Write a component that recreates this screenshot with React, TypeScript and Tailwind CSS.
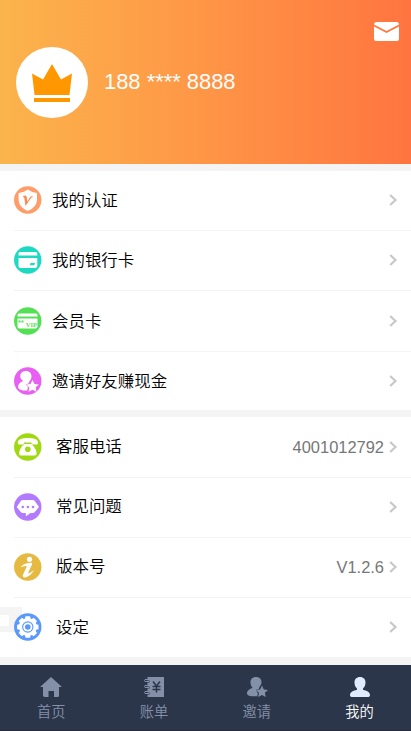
import type { ReactNode } from "react";

type RowProps = {
  label: string;
  icon: ReactNode;
  value?: string;
  height?: string;
  last?: boolean;
  wide?: boolean;
  shift?: string;
};

function Badge({ color, children }: { color: string; children: ReactNode }) {
  return (
    <svg width="28" height="28" viewBox="0 0 28 28" fill="#fff" className="shrink-0">
      <circle cx="13.75" cy="14" r="13.7" fill={color} />
      {children}
    </svg>
  );
}

function ShieldIcon() {
  return (
    <Badge color="#ff9c68">
      <path d="M13.800 3.500q4.500 3.300 9.200 3.500V14q0 7-9.200 11Q4.600 21 4.600 14V7Q9.500 6.800 13.800 3.500z" />
      <path d="M8.800 10.500q2-1.500 3.700-.5l.8 5.500 3-4.500q1-1.200 3-.7-2.200 1.200-3.400 3.200L11.500 20l-1.200-8q-.3-1-1.500-1.500z" fill="#ff8a50" />
    </Badge>
  );
}

function BankCardIcon() {
  return (
    <Badge color="#1dd9c1">
      <path d="M6 6h15.700q1.600 0 1.600 1.500v2H4.500v-2Q4.500 6 6 6zM4.500 12h18.800v8q0 2-2 2H6.500q-2 0-2-2z" />
      <path d="M16.500 17h4.500l-.7 2.200h-4.500z" fill="#1dd9c1" />
    </Badge>
  );
}

function VipCardIcon() {
  return (
    <Badge color="#55df55">
      <path d="M5 6.500h17q1.500 0 1.500 1.500v1.500h-20V8q0-1.500 1.500-1.500zM3.500 11.500h20v8q0 2-2 2h-16q-2 0-2-2z" />
      <path d="M4.500 13.500h2v2h-2zM7.500 13.500h2v2h-2z" fill="#55df55" />
      <text x="11.800" y="20" fontSize="6.500" fontWeight="700" fontFamily="Liberation Serif, serif" fill="#55df55">VIP</text>
    </Badge>
  );
}

function InviteBadgeIcon() {
  return (
    <Badge color="#e860f2">
      <path d="M12 4c3.500 0 5.500 2.300 5.500 5.300 0 2-.8 3.600-2 4.900l-1 2.300-2.500.8 2 3-.8 3.300c-5 .2-9.100-1-9.100-3.600 0-3 2.100-4.700 5.100-6-2-1.200-3-2.900-3-4.900C6.200 6.300 8.400 4 12 4z" />
      <path d="M18.500 13l2 3.900 4.300.6-3.100 3 .7 4.300-3.900-2-3.900 2 .7-4.300-3-3 4.200-.6z" />
    </Badge>
  );
}

function PhoneIcon() {
  return (
    <Badge color="#a0d911">
      <path d="M3.800 9.500C4 6 8.500 5 14 5s9.800 1 10 4.500c0 1.500-.5 2-2 2h-2.500c-1.500 0-2-.5-2-2H10c0 1.500-.5 2-2 2H5.500c-1.200 0-1.700-.5-1.700-2z" />
      <path d="M10.200 11h7.200c1.800 2 4.800 4.500 5.200 9 .1 1.700-.5 2.500-2 2.500H7.200c-1.500 0-2.200-.8-2-2.500.4-4.500 3.300-7 5-9z" />
      <circle cx="13.800" cy="16.200" r="2.800" fill="#a0d911" />
    </Badge>
  );
}

function ChatIcon() {
  return (
    <Badge color="#b27aff">
      <path d="M9 7h9.800q1 0 1.800.8l4.400 6.200-4.400 5.200q-.8.800-1.800.8h-2.300L12 23.200l-.3-3.200H8.800q-1 0-1.800-.8L2.700 14 7 7.800Q7.800 7 9 7z" />
      <g fill="#b27aff">
        <circle cx="8.800" cy="14" r="1.300" />
        <circle cx="13.900" cy="14" r="1.300" />
        <circle cx="19" cy="14" r="1.300" />
      </g>
    </Badge>
  );
}

function InfoIcon() {
  return (
    <Badge color="#e6b940">
      <circle cx="15.500" cy="6.300" r="2.600" />
      <path d="M6.500 14.200c1.800-2.500 6-4.200 10-4.400 1.500 0 1.900.5 1.500 1.600L14.500 19c-.4 1-.1 1.500.8 1.200 1.600-.6 3-2 4.700-3.200-2 4-5.900 7.300-9.200 7.500-1.800 0-2.400-1.300-1.800-2.800l3.500-7.600c.4-1-.1-1.300-1-1.200-1.700.2-3.500.9-5 1.300z" />
    </Badge>
  );
}

function GearIcon() {
  return (
    <Badge color="#5a98fa">
      <circle cx="13.800" cy="14" r="8.900" />
      {[0, 45, 90, 135, 180, 225, 270, 315].map((a) => (
        <path key={a} d="M11.500 3.300h4.600l.8 4h-6.200z" transform={`rotate(${a} 13.800 14)`} />
      ))}
      <circle cx="13.800" cy="14" r="5.700" fill="#5a98fa" />
      <circle cx="13.800" cy="14" r="4.600" />
      <circle cx="13.800" cy="14" r="2.800" fill="#5a98fa" />
    </Badge>
  );
}

function Chevron() {
  return (
    <svg width="9" height="12" viewBox="0 0 9 12" fill="none" stroke="#c8c8cb" strokeWidth="2.200" className="ml-[5px] shrink-0">
      <path d="M1.200 1l5.300 5-5.300 5" />
    </svg>
  );
}

function Row({ label, icon, value, height = "h-[60px] pb-px", last, wide, shift = "" }: RowProps) {
  return (
    <div className={`ml-[14px] flex items-center pr-[13px] ${height} ${last ? "" : "border-b border-[#f4f4f4]"}`}>
      {icon}
      <span className={`relative flex-1 text-[16.44px] leading-6 text-black ${wide ? "ml-[14px]" : "ml-[10px]"} ${shift}`}>
        {label}
      </span>
      {value && <span className="text-[16.44px] leading-6 text-[#777]">{value}</span>}
      <Chevron />
    </div>
  );
}

function Tab({ label, active, children }: { label: string; active?: boolean; children: ReactNode }) {
  return (
    <div className={`flex flex-1 flex-col items-center pt-[11px] ${active ? "text-[#e0ebff]" : "text-[#8490a8]"}`}>
      <svg width="24" height="22" viewBox="0 0 24 22" fill="currentColor">
        {children}
      </svg>
      <span className={`mt-1 text-[14.25px] leading-5 ${active ? "text-white" : ""}`}>{label}</span>
    </div>
  );
}

export default function App() {
  return (
    <div className="relative flex h-[731px] w-[411px] flex-col overflow-hidden bg-[#f4f4f4] font-['Liberation_Sans','Noto_Sans_CJK_SC',sans-serif] [font-weight:350]">
      <header className="flex h-[164px] items-start bg-linear-to-r from-[#fbb44c] to-[#ff7440]">
        <div className="mt-[47px] ml-4 flex h-[71px] w-[72px] items-center justify-center rounded-full bg-white">
          <svg width="42" height="40" viewBox="0 0 42 40" fill="#ff9800">
            <path d="M1 10.500l11 6L21 1l9 15.500 11-6L38.500 32h-35zM3 35h36v4H3z" />
          </svg>
        </div>
        <span className="mt-[67px] ml-4 flex-1 text-[21.92px] leading-[30px] text-white">188 **** 8888</span>
        <svg width="25" height="19" viewBox="0 0 25 19" fill="#fff" className="mt-[22px] mr-3">
          <path d="M2.500 0h20Q25 0 25 2.500L12.500 9 0 2.500Q0 0 2.500 0z" />
          <path d="M0 4.500L12.500 11 25 4.500V17q0 2-2 2H2q-2 0-2-2z" />
        </svg>
      </header>

      <section className="mt-[7px] bg-white">
        <Row label="我的认证" icon={<ShieldIcon />} />
        <Row label="我的银行卡" icon={<BankCardIcon />} />
        <Row label="会员卡" icon={<VipCardIcon />} height="h-[61px]" />
        <Row label="邀请好友赚现金" icon={<InviteBadgeIcon />} height="h-[58px]" last />
      </section>

      <section className="relative mt-[7px] bg-white">
        <div className="absolute top-[190px] left-0 h-[25px] w-[22px] bg-[#f4f4f4] py-2">
          <div className="h-[11px] w-[9px] bg-white" />
        </div>
        <div className="relative">
          <Row label="客服电话" icon={<PhoneIcon />} value="4001012792" height="h-[61px]" wide shift="-top-px" />
          <Row label="常见问题" icon={<ChatIcon />} wide shift="-top-px" />
          <Row label="版本号" icon={<InfoIcon />} value="V1.2.6" wide shift="-top-px" />
          <Row label="设定" icon={<GearIcon />} height="h-[59px] pb-px" wide last />
        </div>
      </section>

      <nav className="mt-2 flex h-[66px] border-b border-[#252b3d] bg-[#2b364a]">
        <Tab label="首页">
          <path d="M12 1l11 10h-3v8.500q0 1.500-1.500 1.500H15v-6H9.500v6h-2Q4 21 4 19.500V11H1z" />
        </Tab>
        <Tab label="账单">
          <path d="M5.500 1H22v20H5.500v-2.500h2v-2h-2v-4h2v-2h-2v-4h2v-2h-2z" />
          <path d="M7 3.500H3q-1 1 0 2h4M7 9.500H3q-1 1 0 2h4M7 15.500H3q-1 1 0 2h4" fill="none" stroke="currentColor" />
          <path d="M11 5.500l3.500 4.500L18 5.500M14.500 10v6.500M10.500 10.500h8M10.500 13.500h8" fill="none" stroke="#2b364a" strokeWidth="1.500" />
        </Tab>
        <Tab label="邀请">
          <path d="M11 1c3.500 0 5.500 2.200 5.500 5.200 0 2-.8 3.300-2 4.600l-.6 2.200-3 1 2 3.200-.7 3C6.800 20.600 2 20 2 17.200c0-2.600 2.700-4.300 5.700-5.200C6.200 10.300 5.500 8.500 5.500 6.200 5.500 3.200 7.500 1 11 1z" />
          <path d="M17 9.500l1.800 3.900 4.200.5-3.100 2.900.8 4.200-3.700-2.100-3.800 2.100.8-4.200-3-2.900 4.200-.5z" />
        </Tab>
        <Tab label="我的" active>
          <path d="M12 1c3.500 0 5.500 2.300 5.500 5.500 0 2.500-.9 4.500-2.500 6v1.300c3.500 1 7 2.200 7 5.200 0 1.500-.8 2-2.500 2h-15C2.800 21 2 20.500 2 19c0-3 3.500-4.200 7-5.200v-1.300c-1.600-1.500-2.500-3.500-2.500-6C6.500 3.300 8.500 1 12 1z" />
        </Tab>
      </nav>
    </div>
  );
}
